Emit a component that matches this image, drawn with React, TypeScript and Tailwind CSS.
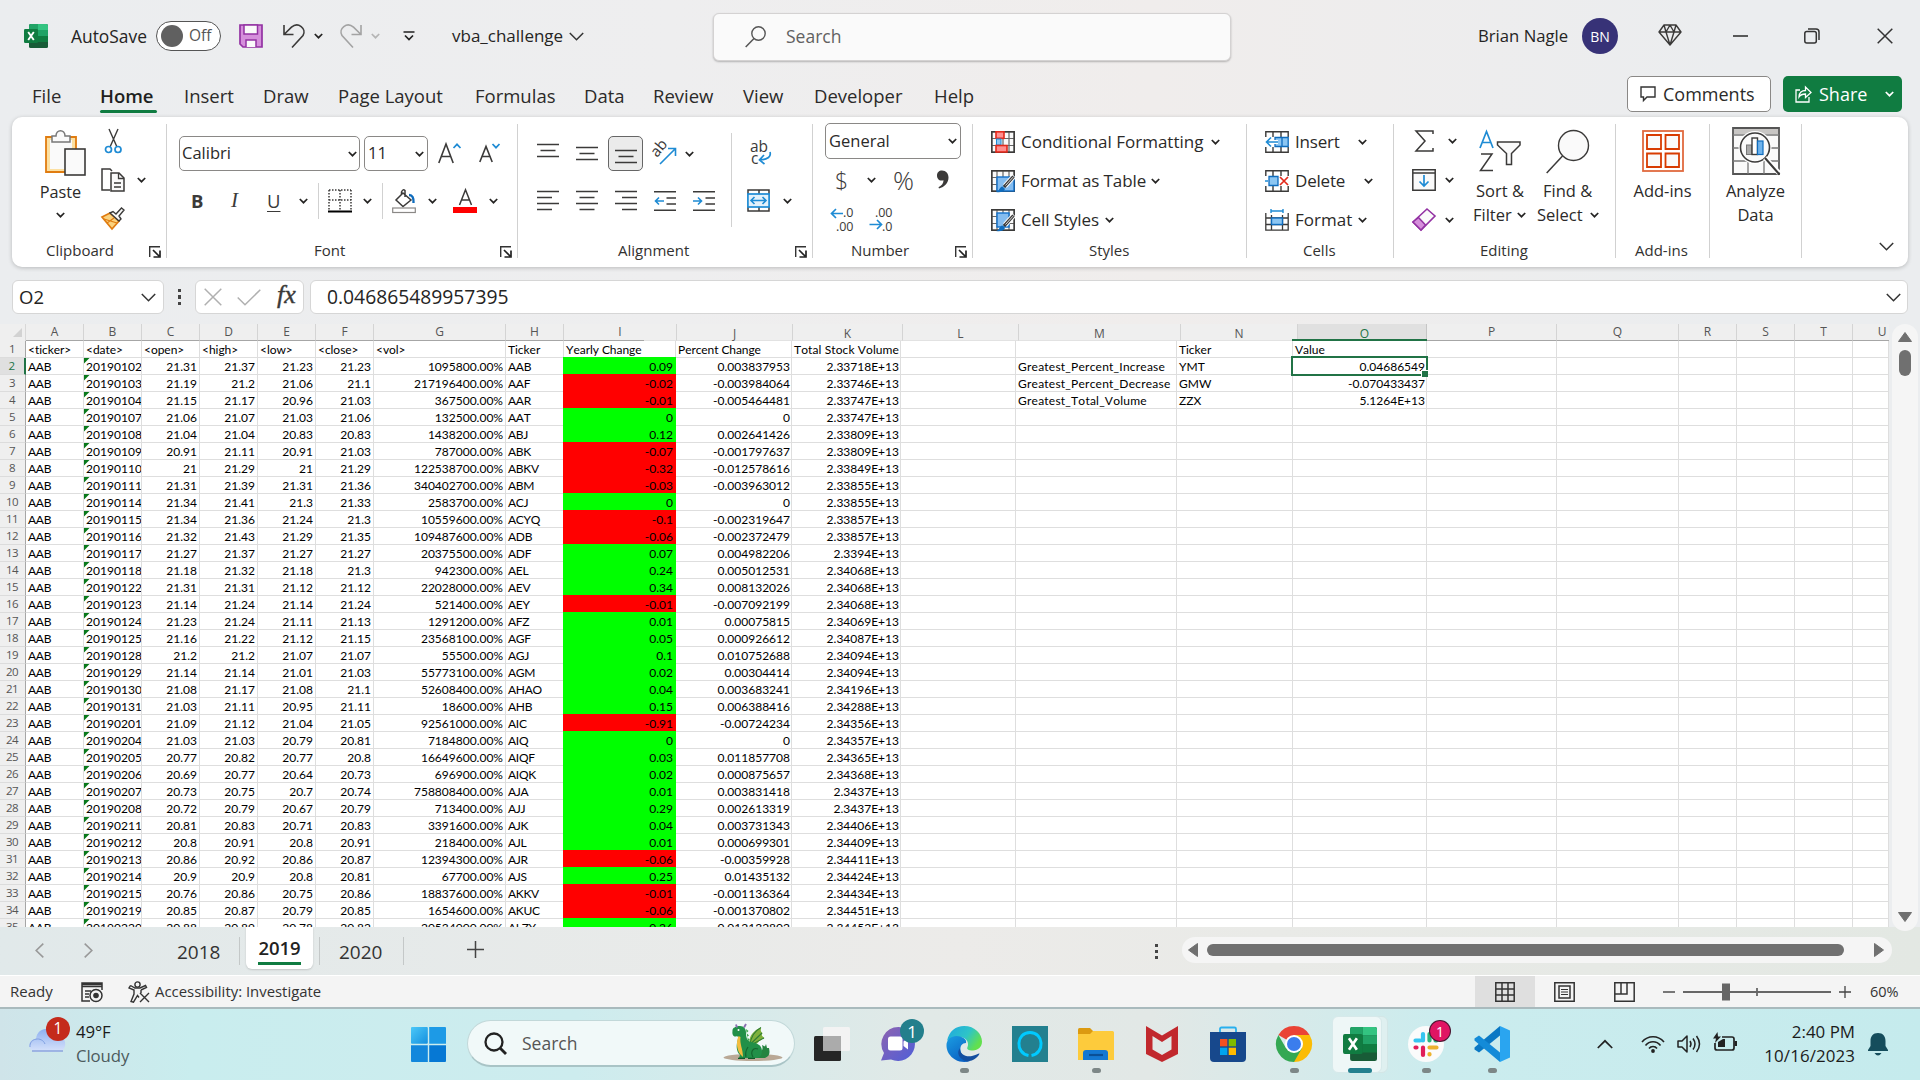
import React from "react";

type IconProps = { w: number; h: number; vb?: string; className?: string; children: React.ReactNode };

function Icon({ w, h, vb, className = "", children }: IconProps) {
  return (
    <svg width={w} height={h} viewBox={vb ?? `0 0 ${w} ${h}`} fill="none" className={`block shrink-0 overflow-visible ${className}`}>
      {children}
    </svg>
  );
}

const INK = "#3b3a39";
const BLUE = "#1e8bd4";

function Chev({ color = "#252423", className = "" }: { color?: string; className?: string }) {
  return (
    <Icon w={9} h={6} className={className}>
      <path d="M0.8 1 4.5 4.7 8.2 1" stroke={color} strokeWidth="1.7" />
    </Icon>
  );
}

function BigChev({ w = 15, className = "" }: { w?: number; className?: string }) {
  return (
    <Icon w={w} h={9} vb="0 0 15 9" className={className}>
      <path d="M0.8 1 7.5 7.8 14.2 1" stroke="#333" strokeWidth="1.5" />
    </Icon>
  );
}

function Launcher({ className = "" }: { className?: string }) {
  return (
    <Icon w={12} h={12} className={className}>
      <path d="M0.7 11V0.7H11" stroke="#333" strokeWidth="1.4" />
      <path d="M4 4 10 10M11 4.5V11H4.5" stroke="#222" strokeWidth="1.7" />
    </Icon>
  );
}

function ExcelLogo({ size }: { size: number }) {
  return (
    <Icon w={size} h={size} vb="0 0 24 24">
      <rect x="5" y="0" width="19" height="24" rx="1.5" fill="#185c37" />
      <path d="M6.5 0H14V6H5V1.5A1.5 1.5 0 0 1 6.500 0Z" fill="#21a366" />
      <path d="M14 0h8.500A1.500 1.500 0 0 1 24 1.500V6H14Z" fill="#33c481" />
      <path d="M5 6h9v6H5Z" fill="#107c41" />
      <path d="M14 6h10v6H14Z" fill="#21a366" />
      <path d="M14 12h10v6H14Z" fill="#107c41" />
      <rect x="0" y="5" width="14" height="14" rx="1.300" fill="#107c41" />
      <path d="M4.200 8 9.800 16M9.800 8 4.200 16" stroke="#fff" strokeWidth="1.900" />
    </Icon>
  );
}

function Lines({ ys, kind }: { ys: number[]; kind: "left" | "center" | "right" }) {
  return (
    <Icon w={22} h={20}>
      {ys.map((y, i) => {
        const short = i % 2 === 1;
        let a = 0;
        let b = 22;
        if (short) {
          if (kind === "left") b = 15;
          if (kind === "right") a = 7;
          if (kind === "center") {
            a = 3.5;
            b = 18.5;
          }
        }
        return <path key={y} d={`M${a} ${y + 0.5}H${b}`} stroke={INK} strokeWidth="1.5" />;
      })}
    </Icon>
  );
}

function TitleBar() {
  return (
    <header className="flex h-[72px] items-center text-[17px] text-[#252423]">
      <div className="w-[71px] pl-6"><ExcelLogo size={24} /></div>
      <div className="w-[85px] text-[17.400px]">AutoSave</div>
      <div className="flex h-[30px] w-[65px] items-center rounded-full border border-[#555] bg-white pl-[4px]">
        <div className="size-[22px] rounded-full bg-[#606060]" />
        <span className="ml-[6px] text-[15.500px] text-[#555]">Off</span>
      </div>
      <Icon w={24} h={24} className="ml-[18px]">
        <path d="M1 1H23V23H4L1 20Z" fill="#d58fdb" stroke="#9332a3" strokeWidth="1.700" />
        <path d="M5 1H18.500V10H5Z" fill="#fafafa" stroke="#9332a3" strokeWidth="1.500" />
        <path d="M7 23V16H17V23" fill="#fafafa" stroke="#9332a3" strokeWidth="1.500" />
      </Icon>
      <Icon w={22} h={24} className="ml-[20px]">
        <path d="M1 1V10.500H10.500M1 10.500 8.500 3.200C15 -2.500 24 4.500 20 11.500L9 23.500" stroke={INK} strokeWidth="1.600" />
      </Icon>
      <Chev className="ml-[9px]" />
      <Icon w={22} h={24} className="ml-[17px]">
        <path d="M21 1V10.500H11.500M21 10.500 13.500 3.200C7 -2.500 -2 4.500 2 11.500L13 23.500" stroke="#a3a3a3" strokeWidth="1.600" />
      </Icon>
      <Chev color="#b5b5b5" className="ml-[9px]" />
      <Icon w={12} h={10} className="ml-[23px]">
        <path d="M0.500 1H11.500M2 4.500 6 8.500 10 4.500" stroke="#222" strokeWidth="1.700" />
      </Icon>
      <div className="ml-[37px] w-[117px]">vba_challenge</div>
      <BigChev />
      <div className="ml-[129px] mt-[1px] flex h-[48px] w-[518px] items-center rounded-md border border-[#d4d2d2] bg-[#fafafa] pl-[31px] shadow-[0_1px_2px_rgba(0,0,0,0.250)]">
        <Icon w={21} h={22}>
          <circle cx="13.500" cy="7.500" r="6.700" stroke="#555" strokeWidth="1.400" />
          <path d="M9 12.500 0.700 21" stroke="#555" strokeWidth="1.500" />
        </Icon>
        <span className="ml-[20px] text-[17.500px] text-[#616161]">Search</span>
      </div>
      <div className="ml-[247px] w-[104px] text-[16.700px]">Brian Nagle</div>
      <div className="grid size-[36px] place-items-center rounded-full bg-[#373277] text-[14px] text-white">BN</div>
      <Icon w={24} h={22} className="ml-[40px] -mt-[2px]">
        <path d="M6 1H18L23 8 12 21 1 8ZM1 8H23M6 1 8 8 12 21 16 8 18 1M8 8 12 1 16 8" stroke={INK} strokeWidth="1.400" strokeLinejoin="round" />
      </Icon>
      <Icon w={15} h={2} className="ml-[51px]"><path d="M0 1H15" stroke="#333" strokeWidth="1.600" /></Icon>
      <Icon w={16} h={16} className="ml-[56px]">
        <rect x="0.800" y="3.500" width="11.500" height="11.500" rx="2" stroke="#333" strokeWidth="1.500" />
        <path d="M4 1H12Q15 1 15 4V12" stroke="#333" strokeWidth="1.500" />
      </Icon>
      <Icon w={16} h={16} className="ml-[57px]"><path d="M0.700 0.700 15.300 15.300M15.300 0.700 0.700 15.300" stroke="#333" strokeWidth="1.500" /></Icon>
    </header>
  );
}

function MenuTabs() {
  return (
    <nav className="flex h-[45px] items-start pl-[32px] text-[18.500px] text-[#2b2a29]">
      <div className="flex h-[48px] items-center whitespace-nowrap">
        <span className="w-[68px]">File</span>
        <span className="relative w-[84px] font-semibold text-[#201f1e]">
          Home
          <span className="absolute -bottom-[3px] left-0 h-[3px] w-[57px] rounded bg-[#107c41]" />
        </span>
        <span className="w-[79px]">Insert</span>
        <span className="w-[75px]">Draw</span>
        <span className="w-[137px]">Page Layout</span>
        <span className="w-[109px]">Formulas</span>
        <span className="w-[69px]">Data</span>
        <span className="w-[90px]">Review</span>
        <span className="w-[71px]">View</span>
        <span className="w-[120px]">Developer</span>
        <span className="w-[693px]">Help</span>
      </div>
      <div className="mt-[4px] flex h-[36px] w-[144px] items-center rounded-[5px] border border-[#8a8886] bg-white pl-[12px] text-[18px]">
        <Icon w={16} h={16}>
          <path d="M1 1H15V11H7L3.500 14.500V11H1Z" stroke="#333" strokeWidth="1.400" />
        </Icon>
        <span className="ml-[7px]">Comments</span>
      </div>
      <div className="ml-[12px] mt-[4px] flex h-[36px] w-[119px] items-center rounded-[5px] bg-[#107c41] pl-[12px] text-[18px] text-white">
        <Icon w={17} h={18}>
          <path d="M5 5H1V17H14V12" stroke="#fff" strokeWidth="1.300" />
          <path d="M4 12C4 7.500 7 5.500 10.500 5.500V2L16 7.500 10.500 12.500V9C8 9 5.500 9.500 4 12Z" stroke="#fff" strokeWidth="1.300" />
        </Icon>
        <span className="ml-[7px] w-[66px]">Share</span>
        <Chev color="#fff" />
      </div>
    </nav>
  );
}

function Group({ label, launcher, className, labelClass = "", children }: { label: string; launcher?: boolean; className: string; labelClass?: string; children: React.ReactNode }) {
  return (
    <section className={`mt-[7px] flex h-[134px] shrink-0 flex-col border-r border-[#d1d1d1] ${className}`}>
      <div className="flex h-[114px]">{children}</div>
      <div className="relative flex h-[20px] items-center whitespace-nowrap pt-[5px] text-[15px] text-[#323130]">
        <span className={labelClass}>{label}</span>
        {launcher && <Launcher className="absolute bottom-0 right-[5px]" />}
      </div>
    </section>
  );
}

function ClipboardGroup() {
  return (
    <Group label="Clipboard" launcher className="w-[155px]" labelClass="ml-[34px]">
      <div className="ml-[27px] flex w-[43px] flex-col items-center pt-[6px]">
        <Icon w={42} h={46} className="ml-[8px]">
          <path d="M2 7H32V42H2Z" fill="#fce0a2" stroke="#e07c10" strokeWidth="1.800" />
          <path d="M6 10H28V39H6Z" fill="#fafafa" />
          <path d="M8 12V6H12C12 -1 21 -1 21 6H26V12Z" fill="#fafafa" stroke="#777" strokeWidth="1.500" />
          <rect x="21" y="19" width="20" height="26" fill="#fafafa" stroke={INK} strokeWidth="1.600" />
        </Icon>
        <span className="mt-[4px] text-[16.300px] leading-[24px]">Paste</span>
        <Chev className="mt-[8px]" />
      </div>
      <div className="ml-[19px] flex flex-col pt-[5px]">
        <Icon w={24} h={25}>
          <path d="M8 0 16 18M17 0 9 18" stroke={INK} strokeWidth="1.400" />
          <circle cx="7.500" cy="20.500" r="3" stroke={BLUE} strokeWidth="1.700" />
          <circle cx="17" cy="20.500" r="3" stroke={BLUE} strokeWidth="1.700" />
        </Icon>
        <div className="mt-[14px] flex items-center">
          <Icon w={24} h={24}>
            <path d="M9 22H1V1H9L11 3" stroke={INK} strokeWidth="1.500" />
            <path d="M10 5H18L23 10V23H10Z" fill="#fafafa" stroke={INK} strokeWidth="1.500" />
            <path d="M17.500 5V10.500H23M13 15H20M13 19H20" stroke={INK} strokeWidth="1.300" />
          </Icon>
          <Chev className="ml-[12px]" />
        </div>
        <Icon w={24} h={23} className="mt-[15px]">
          <path d="M1 10 9 6 18 14 11 22Z" fill="#fbd27d" stroke="#e07c10" strokeWidth="1.700" />
          <path d="M3 12 16 16M6 16 13 11" stroke="#e07c10" strokeWidth="1.200" />
          <path d="M9 6 12 4.500 15 7 20.500 1 23 3 18 9 20 12 18 14Z" fill="#fafafa" stroke={INK} strokeWidth="1.400" />
        </Icon>
      </div>
    </Group>
  );
}

function FontGroup() {
  return (
    <Group label="Font" launcher className="w-[351px]" labelClass="ml-[147px]">
      <div className="flex flex-col pl-[12px] pt-[12px]">
        <div className="flex items-center">
          <div className="flex h-[35px] w-[181px] items-center justify-between rounded-[5px] border border-[#8a8886] pl-[2px] pr-[2px] text-[16.500px]">
            Calibri
            <Chev />
          </div>
          <div className="ml-[4px] flex h-[35px] w-[64px] items-center justify-between rounded-[5px] border border-[#8a8886] pl-[3px] pr-[3px] text-[16.500px]">
            11
            <Chev />
          </div>
          <Icon w={23} h={22} className="ml-[10px] -mt-[2px]">
            <path d="M0.800 21 8 2 15.200 21M3.300 14.500H12.700" stroke={INK} strokeWidth="1.600" />
            <path d="M15.500 6 19 2.300 22.500 6" stroke={BLUE} strokeWidth="1.700" />
          </Icon>
          <Icon w={21} h={22} className="ml-[18px] -mt-[1px]">
            <path d="M0.800 20 7 4.500 13.200 20M3 14.500H11" stroke={INK} strokeWidth="1.600" />
            <path d="M13.500 2 17 5.700 20.500 2" stroke={BLUE} strokeWidth="1.700" />
          </Icon>
        </div>
        <div className="mt-[12px] flex h-[36px] items-center">
          <span className="ml-[12px] w-[40px] text-[18.500px] font-bold text-[#3b3a39]">B</span>
          <span className="w-[36px] font-['Liberation_Serif'] text-[21px] italic text-[#3b3a39]">I</span>
          <span className="w-[32px] text-[18.500px] text-[#3b3a39] underline underline-offset-[3px]">U</span>
          <Chev />
          <div className="ml-[10px] h-full w-px bg-[#d1d1d1]" />
          <Icon w={24} h={24} className="ml-[9px]">
            <path d="M1 1H23M1 1V21M23 1V21M12 1V21M1 11H23" stroke={INK} strokeWidth="1.500" strokeDasharray="1.500 1.500" />
            <path d="M0 22.500H24" stroke="#000" strokeWidth="2" />
          </Icon>
          <Chev className="ml-[11px]" />
          <div className="ml-[10px] h-full w-px bg-[#d1d1d1]" />
          <Icon w={24} h={24} className="ml-[9px]">
            <path d="M11 4 19 11 11 17.500 4 11ZM13 8V1.500Q11 -0.500 9.500 3V6" stroke={INK} strokeWidth="1.500" />
            <path d="M17 6Q22 6 21.500 14" stroke="#0f6cbd" strokeWidth="2.400" />
            <rect x="0.700" y="19" width="22.600" height="4.500" fill="#fff" stroke="#8a8886" strokeWidth="1.200" />
          </Icon>
          <Chev className="ml-[12px]" />
          <Icon w={24} h={24} className="ml-[16px]">
            <path d="M6.500 16 12.500 0.800 18.500 16M8.500 11H16.500" stroke={INK} strokeWidth="1.500" />
            <rect x="0" y="18" width="24" height="6" fill="#f00" />
          </Icon>
          <Chev className="ml-[12px]" />
        </div>
      </div>
    </Group>
  );
}

function AlignmentGroup() {
  return (
    <Group label="Alignment" launcher className="w-[295px]" labelClass="ml-[100px]">
      <div className="flex w-[213px] flex-col pl-[19px] pt-[12px]">
        <div className="flex h-[35px] items-center">
          <Lines ys={[0, 6, 12]} kind="center" />
          <div className="ml-[17px] mt-[7px]"><Lines ys={[0, 6, 12]} kind="center" /></div>
          <div className="ml-[10px] grid h-[35px] w-[35px] place-items-center rounded-[5px] border border-[#666] bg-[#ebebeb] pt-[12px]">
            <Lines ys={[0, 6, 12]} kind="center" />
          </div>
          <Icon w={25} h={24} className="ml-[9px] -mt-[1px]">
            <text x="0" y="0" transform="translate(5 17) rotate(-50)" fontFamily="Open Sans" fontSize="15" fill={INK}>ab</text>
            <path d="M8 23 23 8M16 7.500H23.500V15" stroke={BLUE} strokeWidth="1.600" />
          </Icon>
          <Chev className="ml-[8px]" />
        </div>
        <div className="mt-[20px] flex h-[20px] items-center">
          <Lines ys={[0, 6, 12, 18]} kind="left" />
          <div className="ml-[17px]"><Lines ys={[0, 6, 12, 18]} kind="center" /></div>
          <div className="ml-[17px]"><Lines ys={[0, 6, 12, 18]} kind="right" /></div>
          <Icon w={22} h={20} className="ml-[17px]">
            <path d="M0 0.800H22M12.500 7H22M12.500 13H22M0 19.200H22" stroke={INK} strokeWidth="1.500" />
            <path d="M10 10H1.500M5 6.500 1.500 10 5 13.500" stroke={BLUE} strokeWidth="1.600" />
          </Icon>
          <Icon w={22} h={20} className="ml-[17px]">
            <path d="M0 0.800H22M12.500 7H22M12.500 13H22M0 19.200H22" stroke={INK} strokeWidth="1.500" />
            <path d="M0 10H8.500M5 6.500 8.500 10 5 13.500" stroke={BLUE} strokeWidth="1.600" />
          </Icon>
        </div>
      </div>
      <div className="mt-[9px] h-[94px] w-px bg-[#d1d1d1]" />
      <div className="flex flex-col pl-[15px] pt-[15px]">
        <Icon w={24} h={28} className="ml-[3px]">
          <text x="0" y="13" fontFamily="Open Sans" fontSize="15.500" fill={INK}>ab</text>
          <text x="1" y="25" fontFamily="Open Sans" fontSize="15.500" fill={INK}>c</text>
          <path d="M20 13Q22 20 10 21M14 16 9.500 21 14.500 25" stroke={BLUE} strokeWidth="1.700" />
        </Icon>
        <div className="mt-[22px] flex items-center">
          <Icon w={23} h={23}>
            <path d="M1 5V1H22V5M12 1V5M1 18V22H22V18M12 18V22" stroke={INK} strokeWidth="1.500" />
            <rect x="0.900" y="5" width="21.200" height="13" fill="#e3f1fb" stroke={BLUE} strokeWidth="1.700" />
            <path d="M4 11.500H19M7.500 8 4 11.500 7.500 15M15.500 8 19 11.500 15.500 15" stroke={BLUE} strokeWidth="1.600" />
          </Icon>
          <Chev className="ml-[13px]" />
        </div>
      </div>
    </Group>
  );
}

function Decimals({ inc }: { inc: boolean }) {
  return (
    <Icon w={24} h={24}>
      <text x="23.500" y="10" textAnchor="end" fontFamily="Open Sans" fontSize="12.500" fill={INK}>{inc ? ".0" : ".00"}</text>
      <text x="23.500" y="23.500" textAnchor="end" fontFamily="Open Sans" fontSize="12.500" fill={INK}>{inc ? ".00" : ".0"}</text>
      {inc ? (
        <path d="M13 6.500H1.500M6 2 1.500 6.500 6 11" stroke={BLUE} strokeWidth="1.700" />
      ) : (
        <path d="M0.500 17.500H12M8 13 12.500 17.500 8 22" stroke={BLUE} strokeWidth="1.700" />
      )}
    </Icon>
  );
}

function NumberGroup() {
  return (
    <Group label="Number" launcher className="w-[160px]" labelClass="ml-[38px]">
      <div className="flex flex-col pl-[12px]">
        <div className="-mt-px flex h-[36px] w-[136px] items-center justify-between rounded-[5px] border border-[#8a8886] pl-[3px] pr-[3px] text-[16.500px]">
          General
          <Chev />
        </div>
        <div className="mt-[5px] flex h-[32px] items-center text-[#3b3a39]">
          <span className="ml-[10px] w-[32px] text-[23px] font-light">$</span>
          <Chev />
          <span className="ml-[17px] w-[43px] text-[26px] font-light leading-none">%</span>
          <Icon w={13} h={19} className="-mt-[2px]">
            <path d="M6 0.500C10 0.500 12.500 3.500 12.500 7.500C12.500 13 8.500 17 3 18.500L2.500 17.200C6 15.500 7.500 13 7.500 10.200C3.500 11.500 1 9 1 5.500C1 2.500 3 0.500 6 0.500Z" fill={INK} />
          </Icon>
        </div>
        <div className="mt-[11px] flex">
          <div className="ml-[5px]"><Decimals inc /></div>
          <div className="ml-[15px]"><Decimals inc={false} /></div>
        </div>
      </div>
    </Group>
  );
}

function TableIcon({ kind }: { kind: "cond" | "table" | "cell" }) {
  return (
    <Icon w={24} h={22}>
      <path d="M0.800 0.800H23.200V21.200H0.800ZM0.800 7.500H23.200M0.800 14.500H23.200M6 0.800V21.200M12 0.800V21.200M18 0.800V21.200" fill="#fafafa" stroke="#666" strokeWidth="1.200" />
      <path d="M0.800 0.800H23.200V21.200H0.800Z" stroke={INK} strokeWidth="1.500" />
      {kind === "cond" ? (
        <>
          <rect x="5" y="0.800" width="8" height="6.500" fill="#ff8f8f" stroke="#e3291b" strokeWidth="1.600" />
          <rect x="5.500" y="8" width="4.500" height="6" fill="#8cc6f2" stroke={BLUE} />
          <rect x="5" y="14.500" width="11" height="6.500" fill="#ff8f8f" stroke="#e3291b" strokeWidth="1.600" />
        </>
      ) : (
        <>
          <rect x="6" y={kind === "cell" ? 4 : 7} width={kind === "cell" ? 12 : 17} height="14" fill="#85bdf0" stroke="#1170c9" strokeWidth="1.400" />
          <path d="M23 6 14 16" stroke="#fff" strokeWidth="5" />
          <path d="M22.500 6.500 13 17" stroke={INK} strokeWidth="3.200" />
          <path d="M22 7.200 14.500 15.500" stroke="#ddd" strokeWidth="1" />
          <path d="M5 22C9 21 8 17 11.500 16.500L14 19C13 22.500 8 22.500 5 22Z" fill="#0f6cbd" />
        </>
      )}
    </Icon>
  );
}

function StylesGroup() {
  return (
    <Group label="Styles" className="w-[274px]" labelClass="ml-[116px]">
      <div className="flex flex-col justify-between pb-[7px] pl-[18px] pt-[7px] text-[17px] leading-[22px]">
        <div className="flex items-center"><TableIcon kind="cond" /><span className="ml-[6px] w-[190px]">Conditional Formatting</span><Chev className="-mt-[1px]" /></div>
        <div className="flex items-center"><TableIcon kind="table" /><span className="ml-[6px] w-[130px] tracking-[-0.100px]">Format as Table</span><Chev className="-mt-[1px]" /></div>
        <div className="flex items-center"><TableIcon kind="cell" /><span className="ml-[6px] w-[84px] tracking-[-0.100px]">Cell Styles</span><Chev className="-mt-[1px]" /></div>
      </div>
    </Group>
  );
}

function CellsIcon({ kind }: { kind: "insert" | "delete" | "format" }) {
  return (
    <Icon w={24} h={22}>
      {kind === "format" ? (
        <>
          <path d="M0.800 4V21.200H23.200V4M0.800 9H23.200M0.800 15.500H23.200M6.500 6V21M17.500 6V21" stroke={INK} strokeWidth="1.300" />
          <rect x="6.500" y="9" width="11" height="6.500" fill="#8cc6f2" stroke="#0f6cbd" strokeWidth="1.400" />
          <path d="M6 2H18M6 0V4M18 0V4" stroke={BLUE} strokeWidth="1.400" />
        </>
      ) : (
        <>
          <path d="M0.800 6V0.800H23.200V6M0.800 16V21.200H23.200V16M8 0.800V6M16 0.800V6M8 16V21M16 16V21" stroke={INK} strokeWidth="1.400" />
          {kind === "insert" ? (
            <>
              <path d="M10 6.500H23.200V15.500H10ZM17 6.500V15.500" fill="#8cc6f2" stroke="#0f6cbd" strokeWidth="1.300" />
              <path d="M13 11H1.500M6 6.500 1.500 11 6 15.500" stroke="#fff" strokeWidth="4" />
              <path d="M13 11H1.500M6 6.500 1.500 11 6 15.500" stroke={BLUE} strokeWidth="1.600" />
            </>
          ) : (
            <>
              <path d="M4 6.500H13V15.500H4Z" fill="#8cc6f2" stroke="#0f6cbd" strokeWidth="1.300" />
              <path d="M0 11H3" stroke={BLUE} strokeWidth="1.500" />
              <path d="M15 7 23 15M23 7 15 15" stroke="#e3291b" strokeWidth="1.700" />
            </>
          )}
        </>
      )}
    </Icon>
  );
}

function CellsGroup() {
  return (
    <Group label="Cells" className="w-[147px]" labelClass="ml-[56px]">
      <div className="flex flex-col justify-between pb-[7px] pl-[18px] pt-[7px] text-[17px] leading-[22px]">
        <div className="flex items-center"><CellsIcon kind="insert" /><span className="ml-[6px] w-[63px] tracking-[-0.200px]">Insert</span><Chev /></div>
        <div className="flex items-center"><CellsIcon kind="delete" /><span className="ml-[6px] w-[69px] tracking-[-0.200px]">Delete</span><Chev /></div>
        <div className="flex items-center"><CellsIcon kind="format" /><span className="ml-[6px] w-[63px]">Format</span><Chev /></div>
      </div>
    </Group>
  );
}

function EditingGroup() {
  return (
    <Group label="Editing" className="w-[222px]" labelClass="ml-[86px]">
      <div className="flex flex-col justify-between pb-[7px] pl-[18px] pt-[6px]">
        <div className="flex items-center">
          <Icon w={24} h={22}><path d="M21 4V1H4L13 11 4 21H21V18" stroke={INK} strokeWidth="1.500" /></Icon>
          <Chev className="ml-[12px]" />
        </div>
        <div className="flex items-center">
          <Icon w={24} h={22}>
            <path d="M0.800 0.800H23.200V21.200H0.800ZM0.800 4H23.200" fill="#fafafa" stroke={INK} strokeWidth="1.500" />
            <path d="M12 6V17M7.500 12.500 12 17 16.500 12.500" stroke={BLUE} strokeWidth="1.700" />
          </Icon>
          <Chev className="ml-[9px]" />
        </div>
        <div className="flex items-center">
          <Icon w={24} h={23}>
            <path d="M15 1 23 8 9 22 1 14Z" fill="#fafafa" stroke="#9332a3" strokeWidth="1.600" />
            <path d="M6.500 9.500 13.500 17 9 22 1 14Z" fill="#d58fdb" stroke="#9332a3" strokeWidth="1.500" />
          </Icon>
          <Chev className="ml-[9px]" />
        </div>
      </div>
      <div className="ml-[15px] flex w-[54px] flex-col whitespace-nowrap pt-[6px] text-[16.500px] leading-[24px]">
        <Icon w={42} h={42} className="ml-[7px]">
          <path d="M1 18 7.500 1.500 14 18M3.500 12.500H11.500" stroke={BLUE} strokeWidth="1.700" />
          <path d="M2 24H13L1.500 40.500H14" stroke={INK} strokeWidth="1.500" />
          <path d="M18.500 12H41V15L32.500 23.500V34.500H27.500V23.500L18.500 15Z" fill="#fafafa" stroke={INK} strokeWidth="1.500" />
        </Icon>
        <span className="mt-[7px] pl-[4px]">Sort &amp;</span>
        <span className="flex items-center pl-[1px]"><span className="w-[44px]">Filter</span><Chev /></span>
      </div>
      <div className="ml-[11px] flex w-[62px] flex-col whitespace-nowrap pt-[6px] text-[16.500px] leading-[24px]">
        <Icon w={44} h={44} className="ml-[9px]">
          <circle cx="27.500" cy="15.500" r="15" fill="#fafafa" stroke={INK} strokeWidth="1.400" />
          <path d="M16.500 26 0.700 43" stroke={INK} strokeWidth="1.500" />
        </Icon>
        <span className="mt-[5px] pl-[6px]">Find &amp;</span>
        <span className="flex items-center"><span className="w-[53px]">Select</span><Chev /></span>
      </div>
    </Group>
  );
}

function Ribbon() {
  return (
    <div className="relative mx-[12px] flex h-[150px] shrink-0 rounded-[10px] bg-white text-[#2b2a29] shadow-[0_1px_4px_rgba(0,0,0,0.220)]">
      <ClipboardGroup />
      <FontGroup />
      <AlignmentGroup />
      <NumberGroup />
      <StylesGroup />
      <CellsGroup />
      <EditingGroup />
      <Group label="Add-ins" className="w-[94px]" labelClass="ml-[19px]">
        <div className="flex w-[93px] flex-col items-center pt-[6px] text-[16.500px] leading-[24px]">
          <Icon w={42} h={42}>
            <rect x="1" y="1" width="40" height="40" stroke="#e06a3f" strokeWidth="1.800" />
            <path d="M5 5H19V19H5ZM23.500 5H37V19H23.500ZM5 23.500H19V37H5ZM23.500 23.500H37V37H23.500Z" fill="#fafafa" stroke="#d83b01" strokeWidth="1.800" />
          </Icon>
          <span className="mt-[7px]">Add-ins</span>
        </div>
      </Group>
      <Group label="" className="w-[92px]">
        <div className="flex w-[91px] flex-col items-center pt-[3px] text-[16.500px] leading-[24px]">
          <Icon w={48} h={48}>
            <path d="M1 1H47V47H1Z" fill="#fafafa" stroke="#555" strokeWidth="1.800" />
            <path d="M2 2H46V7H2Z" fill="#c8c6c4" />
            <path d="M1 21H47M1 34H47M16 34V47M32 34V47M1 8H47" stroke="#777" strokeWidth="1.300" />
            <circle cx="23" cy="20.500" r="16.500" fill="#fff" />
            <circle cx="23" cy="20.500" r="14.500" fill="#fafafa" stroke={INK} strokeWidth="1.600" />
            <rect x="14.500" y="18" width="5.500" height="9.500" fill="#aaa" stroke="#777" />
            <rect x="20" y="11" width="5.500" height="16.500" fill="#fff" stroke={INK} strokeWidth="1.400" />
            <rect x="25.500" y="14" width="5.500" height="13.500" fill="#6fb3ec" stroke="#0f6cbd" strokeWidth="1.200" />
            <path d="M33 31 47 46" stroke="#fff" strokeWidth="5" />
            <path d="M33 31 47.500 47.500" stroke={INK} strokeWidth="2" />
          </Icon>
          <span className="mt-[4px]">Analyze</span>
          <span>Data</span>
        </div>
      </Group>
      <div className="ml-[77px] mt-[125px]"><BigChev /></div>
    </div>
  );
}

function FormulaBar() {
  return (
    <div className="mt-[13px] flex h-[34px] shrink-0 items-stretch px-[12px] text-[18.500px] text-[#252423]">
      <div className="flex w-[152px] items-center justify-between rounded-[6px] border border-[#d6d6d6] bg-white pl-[6px] pr-[7px]">
        O2
        <BigChev />
      </div>
      <div className="flex w-[31px] flex-col items-center justify-center gap-[3px]">
        <span className="size-[3.500px] bg-[#444]" />
        <span className="size-[3.500px] bg-[#444]" />
        <span className="size-[3.500px] bg-[#444]" />
      </div>
      <div className="flex w-[109px] items-center rounded-[6px] border border-[#d6d6d6] bg-white pl-[8px]">
        <Icon w={18} h={18}><path d="M0.700 0.700 17.300 17.300M17.300 0.700 0.700 17.300" stroke="#b0b0b0" strokeWidth="1.500" /></Icon>
        <Icon w={24} h={17} className="ml-[15px]"><path d="M0.700 8.500 8 15.800 23.300 0.700" stroke="#b0b0b0" strokeWidth="1.500" /></Icon>
        <span className="-mt-[4px] ml-[16px] font-['Liberation_Serif'] text-[26px] italic leading-none text-[#3b3a39] [-webkit-text-stroke:0.400px_#3b3a39]">fx</span>
      </div>
      <div className="ml-[6px] flex flex-1 items-center justify-between rounded-[6px] border border-[#d6d6d6] bg-white pl-[16px] pr-[6px] text-[19.300px]">
        0.046865489957395
        <BigChev />
      </div>
    </div>
  );
}

const ROWS: string[][] = `AAB|20190102|21.31|21.37|21.23|21.23|1095800.00%|AAB|0.09|0.003837953|2.33718E+13
AAB|20190103|21.19|21.2|21.06|21.1|217196400.00%|AAF|-0.02|-0.003984064|2.33746E+13
AAB|20190104|21.15|21.17|20.96|21.03|367500.00%|AAR|-0.01|-0.005464481|2.33747E+13
AAB|20190107|21.06|21.07|21.03|21.06|132500.00%|AAT|0|0|2.33747E+13
AAB|20190108|21.04|21.04|20.83|20.83|1438200.00%|ABJ|0.12|0.002641426|2.33809E+13
AAB|20190109|20.91|21.11|20.91|21.03|787000.00%|ABK|-0.07|-0.001797637|2.33809E+13
AAB|20190110|21|21.29|21|21.29|122538700.00%|ABKV|-0.32|-0.012578616|2.33849E+13
AAB|20190111|21.31|21.39|21.31|21.36|340402700.00%|ABM|-0.03|-0.003963012|2.33855E+13
AAB|20190114|21.34|21.41|21.3|21.33|2583700.00%|ACJ|0|0|2.33855E+13
AAB|20190115|21.34|21.36|21.24|21.3|10559600.00%|ACYQ|-0.1|-0.002319647|2.33857E+13
AAB|20190116|21.32|21.43|21.29|21.35|109487600.00%|ADB|-0.06|-0.002372479|2.33857E+13
AAB|20190117|21.27|21.37|21.27|21.27|20375500.00%|ADF|0.07|0.004982206|2.3394E+13
AAB|20190118|21.18|21.32|21.18|21.3|942300.00%|AEL|0.24|0.005012531|2.34068E+13
AAB|20190122|21.31|21.31|21.12|21.12|22028000.00%|AEV|0.34|0.008132026|2.34068E+13
AAB|20190123|21.14|21.24|21.14|21.24|521400.00%|AEY|-0.01|-0.007092199|2.34068E+13
AAB|20190124|21.23|21.24|21.11|21.13|1291200.00%|AFZ|0.01|0.00075815|2.34069E+13
AAB|20190125|21.16|21.22|21.12|21.15|23568100.00%|AGF|0.05|0.000926612|2.34087E+13
AAB|20190128|21.2|21.2|21.07|21.07|55500.00%|AGJ|0.1|0.010752688|2.34094E+13
AAB|20190129|21.14|21.14|21.01|21.03|55773100.00%|AGM|0.02|0.00304414|2.34094E+13
AAB|20190130|21.08|21.17|21.08|21.1|52608400.00%|AHAO|0.04|0.003683241|2.34196E+13
AAB|20190131|21.03|21.11|20.95|21.11|18600.00%|AHB|0.15|0.006388416|2.34288E+13
AAB|20190201|21.09|21.12|21.04|21.05|92561000.00%|AIC|-0.91|-0.00724234|2.34356E+13
AAB|20190204|21.03|21.03|20.79|20.81|7184800.00%|AIQ|0|0|2.34357E+13
AAB|20190205|20.77|20.82|20.77|20.8|16649600.00%|AIQF|0.03|0.011857708|2.34365E+13
AAB|20190206|20.69|20.77|20.64|20.73|696900.00%|AIQK|0.02|0.000875657|2.34368E+13
AAB|20190207|20.73|20.75|20.7|20.74|758808400.00%|AJA|0.01|0.003831418|2.3437E+13
AAB|20190208|20.72|20.79|20.67|20.79|713400.00%|AJJ|0.29|0.002613319|2.3437E+13
AAB|20190211|20.81|20.83|20.71|20.83|3391600.00%|AJK|0.04|0.003731343|2.34406E+13
AAB|20190212|20.8|20.91|20.8|20.91|218400.00%|AJL|0.01|0.000699301|2.34409E+13
AAB|20190213|20.86|20.92|20.86|20.87|12394300.00%|AJR|-0.06|-0.00359928|2.34411E+13
AAB|20190214|20.9|20.9|20.8|20.81|67700.00%|AJS|0.25|0.01435132|2.34424E+13
AAB|20190215|20.76|20.86|20.75|20.86|18837600.00%|AKKV|-0.01|-0.001136364|2.34434E+13
AAB|20190219|20.85|20.87|20.79|20.85|1654600.00%|AKUC|-0.06|-0.001370802|2.34451E+13
AAB|20190220|20.88|20.89|20.78|20.82|20534000.00%|ALZY|0.26|0.012132802|2.34452E+13`
  .split("\n")
  .map((line) => line.split("|"));

const HEADINGS = ["<ticker>", "<date>", "<open>", "<high>", "<low>", "<close>", "<vol>", "Ticker", "Yearly Change", "Percent Change", "Total Stock Volume", "", "", "Ticker", "Value"];

const SUMMARY: string[][] = [
  ["Greatest_Percent_Increase", "YMT", "0.04686549"],
  ["Greatest_Percent_Decrease", "GMW", "-0.070433437"],
  ["Greatest_Total_Volume", "ZZX", "5.1264E+13"],
];

const COLS = [
  "w-[58px]", "w-[58px]", "w-[58px]", "w-[58px]", "w-[58px]", "w-[58px]", "w-[132px]", "w-[58px]", "w-[112px]", "w-[116px]",
  "w-[109px]", "w-[115px]", "w-[161px]", "w-[116px]", "w-[134px]", "w-[130px]", "w-[122px]", "w-[58px]", "w-[58px]", "w-[58px]", "w-[36px]",
];

const HEAD_COLS = [
  "w-[58px]", "w-[58px]", "w-[58px]", "w-[58px]", "w-[58px]", "w-[58px]", "w-[132px]", "w-[58px]", "w-[113px]", "w-[116px]",
  "w-[110px]", "w-[116px]", "w-[162px]", "w-[117px]", "w-[129px]", "w-[130px]", "w-[122px]", "w-[58px]", "w-[58px]", "w-[58px]", "w-[36px]",
];

const LEFT_COLS = new Set([0, 1, 7, 12, 13]);

function spacing(row: number, col: number): string {
  if (row === 1) return col === 10 ? "tracking-[0.100px]" : col === 9 ? "tracking-[-0.080px]" : "tracking-[-0.050px]";
  if (col === 12) return "tracking-[0.220px]";
  if (col === 1) return "tracking-[0.050px]";
  if (col === 0 || col === 7) return "tracking-[-0.300px]";
  return "";
}

function ColumnHeaders() {
  return (
    <div className="mt-[10px] flex h-[17px] shrink-0 bg-[#efefef] text-[12px] leading-[15px] text-[#555]">
      <div className="flex w-[26px] shrink-0 items-end justify-end border-r border-[#d8d8d8] pb-[4px] pr-[3px]">
        <Icon w={9} h={9}><path d="M9 0V9H0Z" fill="#d2d2d2" /></Icon>
      </div>
      {HEAD_COLS.map((w, i) => {
        const low = i >= 9 && i <= 14;
        const sel = i === 14;
        return (
          <div
            key={i}
            className={`relative flex shrink-0 justify-center border-r ${w} ${low ? "pt-[2px]" : "pt-0"} ${sel ? "border-[#c6c6c6] bg-[#e0e0e0] pl-[5px] text-[#217346]" : "border-[#d4d4d4]"} ${i < 8 || i > 14 ? "border-b border-b-[#a6a6a6]" : "border-b border-b-[#e2e2e2]"} ${i === 20 ? "border-r-0 pl-[22px]" : ""}`}
          >
            {String.fromCharCode(65 + i)}
            {i === 8 && <span className="absolute -bottom-px left-0 h-px w-[80px] bg-[#a6a6a6]" />}
            {sel && <span className="absolute -bottom-px -left-[6px] h-[2px] w-[135px] bg-[#217346]" />}
          </div>
        );
      })}
    </div>
  );
}

function cellText(row: number, col: number): string {
  if (row === 1) return HEADINGS[col] ?? "";
  if (col < 11) return ROWS[row - 2][col];
  if (row <= 4 && col >= 12 && col <= 14) return SUMMARY[row - 2][col - 12];
  return "";
}

function Cell({ row, col }: { row: number; col: number }) {
  const text = cellText(row, col);
  if (col === 8 && row > 1) {
    return (
      <div className={`relative -ml-px -mt-px h-[17px] w-[113px] shrink-0 pr-[3px] pt-[1px] text-right ${text.startsWith("-") ? "bg-[#ff0000]" : "bg-[#00ff00]"}`}>{text}</div>
    );
  }
  const left = row === 1 || LEFT_COLS.has(col);
  const active = col === 14 && row === 2;
  return (
    <div className={`relative h-[17px] shrink-0 border-b border-r border-[#dedede] pl-[2px] ${COLS[col]} ${left ? "text-left" : "text-right"} ${spacing(row, col)} ${col === 9 || col === 10 || col === 14 ? "pr-[1px]" : "pr-[2px]"} ${col === 1 ? "overflow-hidden" : ""} ${active ? "z-10" : ""}`}>
      {text}
      {col === 1 && row > 1 && (
        <Icon w={5} h={5} className="absolute left-0 top-0"><path d="M0 0H5.500L0 5.500Z" fill="#08781a" /></Icon>
      )}
      {active && (
        <>
          <span className="absolute -left-[2px] -top-[2px] h-[20px] w-[137px] border-2 border-[#217346]" />
          <span className="absolute -bottom-[3px] -right-[2px] size-[7px] border-l border-t border-white bg-[#217346]" />
        </>
      )}
    </div>
  );
}

function Sheet() {
  return (
    <div className="relative flex h-[613px] shrink-0">
      <div className="w-[1889px] overflow-hidden">
        <ColumnHeaders />
        <div className="h-[586px] overflow-hidden bg-white font-['Lato'] text-[12px] leading-[17px] text-black [font-kerning:none]">
          {Array.from({ length: 35 }, (_, i) => i + 1).map((row) => (
            <div key={row} className="flex h-[17px] whitespace-nowrap">
              <div className={`h-[17px] w-[26px] shrink-0 border-b border-[#dcdcdc] pr-[1px] text-center font-['Open_Sans'] text-[11.500px] leading-[16px] tracking-[-0.500px] ${row === 2 ? "border-r-2 border-r-[#217346] bg-[#e0e0e0] text-[#217346]" : "border-r border-r-[#a6a6a6] bg-[#efefef] text-[#555]"}`}>{row}</div>
              {COLS.map((_, col) => (
                <Cell key={col} row={row} col={col} />
              ))}
            </div>
          ))}
        </div>
      </div>
      <div className="ml-[3px] mt-[10px] flex h-[607px] w-[26px] flex-col items-center rounded-full bg-[#f5f5f5] pt-[8px]">
        <Icon w={14} h={10}><path d="M7 0.500 13.500 9.500H0.500Z" fill="#707070" stroke="#707070" strokeLinejoin="round" /></Icon>
        <div className="mt-[8px] h-[26px] w-[12px] rounded-full bg-[#707070]" />
        <Icon w={14} h={10} className="mt-[536px]"><path d="M7 9.500 13.500 0.500H0.500Z" fill="#707070" stroke="#707070" strokeLinejoin="round" /></Icon>
      </div>
    </div>
  );
}

function SheetTabs() {
  return (
    <div className="flex h-[48px] shrink-0 items-start bg-linear-to-r from-[#e1e9ea] via-[#ecebe9] to-[#e3e8e3] text-[19px] text-[#333]">
      <div className="flex h-[52px] w-[177px] items-center gap-[40px] pb-[6px] pl-[35px]">
        <Icon w={9} h={15}><path d="M8.300 0.700 1.200 7.500 8.300 14.300" stroke="#999" strokeWidth="1.600" /></Icon>
        <Icon w={9} h={15}><path d="M0.700 0.700 7.800 7.500 0.700 14.300" stroke="#999" strokeWidth="1.600" /></Icon>
      </div>
      <span className="mt-[12px] w-[62px] leading-[26px]">2018</span>
      <div className="mt-[10px] h-[28px] w-px bg-[#c4c8c8]" />
      <div className="ml-[6px] flex h-[42px] w-[67px] flex-col items-center rounded-b-[6px] bg-white pt-[8px] shadow-[0_1px_2px_rgba(0,0,0,0.150)]">
        <span className="text-[18.500px] font-semibold leading-[26px] tracking-[-0.100px] text-[#222]">2019</span>
        <span className="mt-[1px] h-[3px] w-[43px] bg-[#107c41]" />
      </div>
      <div className="ml-[6px] mt-[10px] h-[28px] w-px bg-[#c4c8c8]" />
      <span className="ml-[19px] mt-[12px] w-[64px] leading-[26px]">2020</span>
      <div className="mt-[10px] h-[28px] w-px bg-[#c4c8c8]" />
      <Icon w={17} h={17} className="ml-[63px] mt-[14px]"><path d="M8.500 0V17M0 8.500H17" stroke="#444" strokeWidth="1.500" /></Icon>
      <div className="ml-[671px] mt-[17px] flex flex-col gap-[3px]">
        <span className="size-[3px] bg-[#444]" />
        <span className="size-[3px] bg-[#444]" />
        <span className="size-[3px] bg-[#444]" />
      </div>
      <div className="ml-[24px] mt-[10px] flex h-[26px] w-[710px] items-center rounded-full bg-[#f5f5f5] pl-[6px]">
        <Icon w={10} h={14}><path d="M0.500 7 9.500 0.500V13.500Z" fill="#707070" stroke="#707070" strokeLinejoin="round" /></Icon>
        <div className="ml-[9px] h-[12px] w-[637px] rounded-full bg-[#707070]" />
        <Icon w={10} h={14} className="ml-[30px]"><path d="M9.500 7 0.500 0.500V13.500Z" fill="#707070" stroke="#707070" strokeLinejoin="round" /></Icon>
      </div>
    </div>
  );
}

function StatusBar() {
  return (
    <div className="flex h-[34px] shrink-0 items-center border-b-2 border-t border-b-[#a9babd] border-t-white bg-[#f4f4f4] pl-[10px] text-[15px] text-[#333]">
      <span className="w-[71px] text-[15px]">Ready</span>
      <Icon w={22} h={20}>
        <path d="M21 8V1H1V19H9M1 4.500H21M1 2.500H21M4 9H10M4 12H8M4 15H8" stroke="#333" strokeWidth="1.500" />
        <circle cx="15" cy="13.500" r="6" stroke="#333" strokeWidth="1.500" />
        <circle cx="15" cy="13.500" r="2.800" fill="#333" />
      </Icon>
      <Icon w={22} h={22} className="ml-[25px]">
        <circle cx="9.500" cy="3.500" r="2.600" stroke="#333" strokeWidth="1.400" />
        <path d="M2.500 4.500 1 7 6 9V13L3 20.500 5.500 21.200 9.500 14.500 11 16.500M13 9 18.500 6.500 17.500 4.500 12 7H7L2.500 4.500M13 9V12" stroke="#333" strokeWidth="1.400" />
        <path d="M12 12 21 21M21 12 12 21" stroke="#333" strokeWidth="1.400" />
      </Icon>
      <span className="ml-[5px] w-[1320px] text-[14.900px]">Accessibility: Investigate</span>
      <div className="grid h-full w-[60px] place-items-center bg-[#dfdfdf]">
        <Icon w={20} h={20}><path d="M0.800 0.800H19.200V19.200H0.800ZM0.800 7H19.200M0.800 13H19.200M7 0.800V19M13 0.800V19" stroke="#333" strokeWidth="1.500" /></Icon>
      </div>
      <Icon w={21} h={20} className="ml-[19px]">
        <path d="M0.800 0.800H20.200V19.200H0.800ZM5 4H16V16H5Z" stroke="#333" strokeWidth="1.500" />
        <path d="M7 7.500H14M7 10H14M7 12.500H14" stroke="#333" strokeWidth="1.200" />
      </Icon>
      <Icon w={21} h={20} className="ml-[39px]">
        <path d="M0.800 0.800H20.200V19.200H0.800ZM0.800 12H13V0.800M7 0.800V12" stroke="#333" strokeWidth="1.500" />
      </Icon>
      <Icon w={12} h={2} className="ml-[28px]"><path d="M0 1H12" stroke="#333" strokeWidth="1.300" /></Icon>
      <Icon w={148} h={18} className="ml-[8px]">
        <path d="M0 9H148" stroke="#666" strokeWidth="1.800" />
        <path d="M74 5V13" stroke="#666" strokeWidth="1.800" />
        <rect x="39" y="0.500" width="8" height="17" fill="#666" />
      </Icon>
      <Icon w={12} h={12} className="ml-[8px]"><path d="M6 0V12M0 6H12" stroke="#444" strokeWidth="1.300" /></Icon>
      <span className="ml-[19px] text-[14.500px]">60%</span>
    </div>
  );
}

function Dragon() {
  return (
    <Icon w={58} h={38}>
      <ellipse cx="29" cy="33.500" rx="29.500" ry="3.500" fill="#b9a895" />
      <path d="M26 21C24 14 28 7 37 3.500C37 6 36 7 38.500 9C37 11 38 12 40.500 14C38 14 37 17 35 17C34 20 30 20 29 23Z" fill="#7fb13c" />
      <path d="M26 21Q27 9 37 3.500M26.500 20 38 9M27 21 40 14" stroke="#2f7d33" strokeWidth="1.100" />
      <path d="M33 32C36 26 40 28 38 21L41 22.500 42 20 43 24 45 24C46 29 46 32 41 34H31Z" fill="#23843f" />
      <path d="M8.500 7C8 4 12 2 16 2C20 2 22 5 22 9C22 13 23 17 27 18C33 19 38 21 38 27C38 31 36 34 32 34H15L16 31C12 27 12 21 14 15C14.500 13 14 12 12 12.500C9 13 8 10 8.500 7Z" fill="#219048" />
      <path d="M22 5 24.500 7 22.500 9 25 11.500 23 13 26 16 24 17Z" fill="#3aa449" />
      <path d="M14.500 12C12.500 17 12 24 16 30L19 33C19 25 15.500 20 16.500 13Z" fill="#f2bd3f" />
      <path d="M22 33C21 29 22 26 24 23M29 33C26 28 29 23 34 25" stroke="#14662f" strokeWidth="1.200" />
      <path d="M13 3.500 12 0.500M20 3.500 22 0" stroke="#8b6fb0" strokeWidth="1.900" />
      <path d="M14 34.300H21M24 34.300H31" stroke="#0f5a28" strokeWidth="1.200" />
      <circle cx="14.500" cy="6" r="1" fill="#fff" />
    </Icon>
  );
}

function Task({ running, children }: { running?: boolean; children: React.ReactNode }) {
  return (
    <div className="relative flex h-full w-[66px] justify-center pt-[17px]">
      {children}
      {running && <span className="absolute bottom-[7px] left-[28.500px] h-[5px] w-[9px] rounded-full bg-[#7d8787]" />}
    </div>
  );
}

function Taskbar() {
  return (
    <div className="flex h-[71px] shrink-0 bg-[linear-gradient(90deg,#cfe4e9_0%,#c9edee_10%,#cdecee_30%,#e1e9e7_48%,#e2e8e6_60%,#cbecee_75%,#c5ebed_100%)]">
      <div className="relative w-[76px] pl-[29px] pt-[16px]">
        <Icon w={37} h={28}>
          <defs>
            <linearGradient id="cloud" x1="0" y1="0" x2="0" y2="1"><stop offset="0" stopColor="#8db0f0" /><stop offset="1" stopColor="#d8e3fb" /></linearGradient>
          </defs>
          <path d="M8 27C-2 27 -2 14 7 14C8 2 24 0 27 11C39 10 39 27 29 27Z" fill="url(#cloud)" />
          <path d="M1 22C0 13 13 11 16 19" fill="none" stroke="#7f9fe0" strokeWidth="1" />
          <path d="M3 26H34" stroke="#8ba4dc" strokeWidth="1.500" />
        </Icon>
        <span className="absolute left-[46px] top-[8px] grid size-[24px] place-items-center rounded-full bg-[#c42b1c] text-[15.500px] text-white">1</span>
      </div>
      <div className="w-[335px] pt-[11px] text-[16.800px] leading-[24px] tracking-[-0.100px]">
        <div className="text-[#1b1b1b]">49°F</div>
        <div className="text-[#4d5b5d]">Cloudy</div>
      </div>
      <Icon w={35} h={35} className="mt-[18px]">
        <defs><linearGradient id="win" x1="0" y1="0" x2="1" y2="1" gradientUnits="objectBoundingBox"><stop offset="0" stopColor="#4cc8f8" /><stop offset="1" stopColor="#1490df" /></linearGradient></defs>
        <rect width="16.800" height="16.800" rx="1" fill="url(#win)" />
        <path d="M18.200 0H34Q35 0 35 1V16.800H18.200Z" fill="#1d9ae6" />
        <path d="M0 18.200H16.800V35H1Q0 35 0 34Z" fill="#1287dc" />
        <path d="M18.200 18.200H35V34Q35 35 34 35H18.200Z" fill="#0678d4" />
      </Icon>
      <div className="ml-[21px] mt-[11px] flex h-[47px] w-[328px] items-center rounded-full border border-b-2 border-[#c2d8d9] border-b-[#a9c4c6] bg-[#f1f9f9] pl-[16px]">
        <Icon w={23} h={23}>
          <circle cx="10" cy="10" r="8.500" stroke="#222" strokeWidth="2.300" />
          <path d="M16 16 22 22" stroke="#222" strokeWidth="2.800" />
        </Icon>
        <span className="ml-[15px] w-[202px] text-[17.500px] text-[#555]">Search</span>
        <Dragon />
      </div>
      <div className="ml-[4px] flex h-full">
        <Task>
          <Icon w={36} h={36}>
            <rect x="0" y="10" width="27" height="25" rx="1.500" fill="#262626" />
            <rect x="9" y="1" width="27" height="24" rx="1.500" fill="#f3f3f3" />
            <path d="M9 10H27V25H10.500Q9 25 9 23.500Z" fill="#ababab" />
          </Icon>
        </Task>
        <Task>
          <Icon w={35} h={36}>
            <defs><linearGradient id="chat" x1="0" y1="0" x2="1" y2="1"><stop offset="0" stopColor="#8e63b0" /><stop offset="1" stopColor="#4f5fd8" /></linearGradient></defs>
            <path d="M17.500 1A17 17 0 1 1 10 33.500L0 34.500 3 27A17 17 0 0 1 17.500 1Z" fill="url(#chat)" />
            <rect x="7" y="10.500" width="14.500" height="14" rx="2.500" fill="#fff" />
            <path d="M22.500 15.500 27 12V23.500L22.500 20Z" fill="#fff" />
          </Icon>
          <span className="absolute left-[35px] top-[10px] grid size-[24px] place-items-center rounded-full bg-[#237f8c] text-[17px] text-white">1</span>
        </Task>
        <Task running>
          <Icon w={36} h={36}>
            <defs>
              <linearGradient id="edgeA" x1="0" y1="0" x2="1" y2="0.500"><stop offset="0" stopColor="#1ea7e0" /><stop offset="0.600" stopColor="#2ec4c8" /><stop offset="1" stopColor="#62e04e" /></linearGradient>
              <linearGradient id="edgeB" x1="0" y1="0" x2="0.600" y2="1"><stop offset="0" stopColor="#1b9de2" /><stop offset="1" stopColor="#0b63c4" /></linearGradient>
            </defs>
            <path d="M1 15C3 5 10 0 18 0C29 0 36 8 36 15.500C36 21 32 24.500 27 24.500C22 24.500 20.500 23 21.500 21C23 18 22 12 14 11C8 10.500 3 13 1 15Z" fill="url(#edgeA)" />
            <path d="M0.500 20C0 12 8 8.500 14 10.500C20 12.500 20.500 15 20 17C16 17 14 20 14.500 24C15 30 21 34 24 35C20 36.500 14 36.500 9 33.500C4 30.500 0.700 25.500 0.500 20Z" fill="url(#edgeB)" />
            <path d="M14 22C13 28 20 31.500 26 30C30 29 33 27 33.500 27.500C33 30 28 35 21 35.500C13 33 10 27 14 22Z" fill="#144fa0" />
          </Icon>
        </Task>
        <Task>
          <Icon w={36} h={36}>
            <rect width="36" height="36" fill="#23808f" />
            <path d="M16.500 29.500C3 27 4 6.500 18 6.500S33 27 19.500 29.500" stroke="#00caff" strokeWidth="3" />
          </Icon>
        </Task>
        <Task running>
          <Icon w={36} h={36}>
            <path d="M0 3.500Q0 2 1.500 2H12L15 5V8H0Z" fill="#dc9a10" />
            <path d="M0 8H12L15 5H34.500Q36 5 36 6.500V34H0Z" fill="#fdcb3c" />
            <path d="M5 34V27Q5 24 8 24H27Q30 24 30 27V34Z" fill="#1478d2" />
            <path d="M11 29H25" stroke="#0a4f96" strokeWidth="2.200" />
          </Icon>
        </Task>
        <Task>
          <Icon w={32} h={36}>
            <path d="M0 0 16 9.500 32 0V28L16 36 0 28ZM6.500 10V23.500L16 29 25.500 23.500V10L16 16Z" fill="#c1282d" fillRule="evenodd" />
          </Icon>
        </Task>
        <Task>
          <Icon w={36} h={36}>
            <path d="M10 7V3Q10 1.500 11.500 1.500H24.500Q26 1.500 26 3V7" stroke="#29b0ee" strokeWidth="1.800" />
            <path d="M0 6H36V32Q36 36 32 36H4Q0 36 0 32Z" fill="#17488c" />
            <path d="M10 13H17.300V20.300H10Z" fill="#f25022" /><path d="M18.700 13H26V20.300H18.700Z" fill="#7fba00" />
            <path d="M10 21.700H17.300V29H10Z" fill="#00a4ef" /><path d="M18.700 21.700H26V29H18.700Z" fill="#ffb900" />
          </Icon>
        </Task>
        <Task running>
          <Icon w={36} h={36}>
            <path d="M18 18 2.400 9A18 18 0 0 1 33.600 9Z" fill="#ea4335" />
            <path d="M18 18V9H33.600A18 18 0 0 1 18 36Z" fill="#fbbc05" />
            <path d="M18 18 25.800 22.500 18 36A18 18 0 0 1 2.400 9L10.200 22.500Z" fill="#34a853" />
            <circle cx="18" cy="18" r="9" fill="#fff" /><circle cx="18" cy="18" r="7" fill="#3b7ded" />
          </Icon>
        </Task>
        <div className="relative flex h-full w-[66px] justify-center pt-[18px]">
          <span className="absolute left-[10px] top-[7px] h-[57px] w-[51px] rounded-[6px] border border-[#d3e6e6] bg-[#dff0f0]" />
          <span className="absolute left-[5px] top-[7px] h-[57px] w-[50px] rounded-[6px] border border-[#d6e9ea] bg-[#eef7f7]" />
          <div className="relative"><ExcelLogo size={34} /></div>
          <span className="absolute bottom-[7px] left-[21px] h-[5px] w-[24px] rounded-full bg-[#23808f]" />
        </div>
        <Task running>
          <Icon w={36} h={36}>
            <circle cx="18" cy="18" r="18" fill="#fbfbfb" />
            <path d="M15 8V14.500M7.500 14.500H12" stroke="#36c5f0" strokeWidth="4.200" strokeLinecap="round" />
            <path d="M21.500 8V14.500M28.500 14.500H27.500" stroke="#2eb67d" strokeWidth="4.200" strokeLinecap="round" />
            <path d="M15 21.500V29M7.500 21.500H8.500" stroke="#e01e5a" strokeWidth="4.200" strokeLinecap="round" />
            <path d="M21.500 21.500H28.500M21.500 28V28.500" stroke="#ecb22e" strokeWidth="4.200" strokeLinecap="round" />
          </Icon>
          <span className="absolute left-[37px] top-[12px] grid size-[20px] place-items-center rounded-full bg-[#e01563] text-[14px] text-white ring-1 ring-[#4a1530]">1</span>
        </Task>
        <Task running>
          <Icon w={36} h={36}>
            <path d="M26 0 36 4.500V31.500L26 36Z" fill="#2aa5f0" />
            <path d="M26 0V9.500L5 26.500 0.500 23.500V21.500Z" fill="#0a78c4" />
            <path d="M26 36V26.500L5 9.500 0.500 12.500V14.500Z" fill="#148bd8" />
          </Icon>
        </Task>
      </div>
      <div className="ml-[72px] flex h-[70px] items-center">
        <Icon w={16} h={10}><path d="M0.800 9 8 1.800 15.200 9" stroke="#222" strokeWidth="1.700" /></Icon>
        <Icon w={24} h={18} className="ml-[28px]">
          <path d="M1 7C7 0 17 0 23 7M4.500 10.500C8.500 5.500 15.500 5.500 19.500 10.500M8 13.500C10 10.800 14 10.800 16 13.500" stroke="#222" strokeWidth="1.600" />
          <circle cx="12" cy="16" r="1.900" fill="#222" />
        </Icon>
        <Icon w={24} h={20} className="ml-[12px]">
          <path d="M1 7H5L10 2V18L5 13H1Z" stroke="#222" strokeWidth="1.500" strokeLinejoin="round" />
          <path d="M13 7Q15 10 13 13M16 4.500Q20 10 16 15.500M19.500 2Q25.500 10 19.500 18" stroke="#222" strokeWidth="1.500" />
        </Icon>
        <Icon w={24} h={20} className="ml-[12px] -mt-[4px]">
          <path d="M9 5H19Q21 5 21 7V16Q21 18 19 18H4Q2 18 2 16V11" stroke="#222" strokeWidth="1.700" />
          <path d="M5 15V10L10 7H12V15Z" fill="#222" /><rect x="21.500" y="9" width="2.500" height="5" fill="#222" />
          <path d="M4.500 0 0 6.500H3L2 11 8 4.500H5Z" fill="#222" />
        </Icon>
        <div className="w-[118px] whitespace-nowrap text-right text-[16.900px] leading-[24px] text-[#1b1b1b]">
          <div>2:40 PM</div>
          <div className="tracking-[0.100px]">10/16/2023</div>
        </div>
        <Icon w={20} h={23} className="ml-[13px]">
          <path d="M10 0C15 0 17.500 3.500 17.500 8V13L20 17V18H0V17L2.500 13V8C2.500 3.500 5 0 10 0Z" fill="#154d5c" />
          <path d="M6.500 20H13.500Q10 25 6.500 20Z" fill="#154d5c" />
        </Icon>
      </div>
    </div>
  );
}

export default function App() {
  return (
    <div className="flex h-[1080px] w-[1920px] flex-col overflow-hidden bg-[linear-gradient(90deg,#ebedef_0%,#eeeeef_35%,#f0edec_60%,#ebedef_90%)] font-['Open_Sans',sans-serif]">
      <TitleBar />
      <MenuTabs />
      <Ribbon />
      <FormulaBar />
      <Sheet />
      <SheetTabs />
      <StatusBar />
      <Taskbar />
    </div>
  );
}
